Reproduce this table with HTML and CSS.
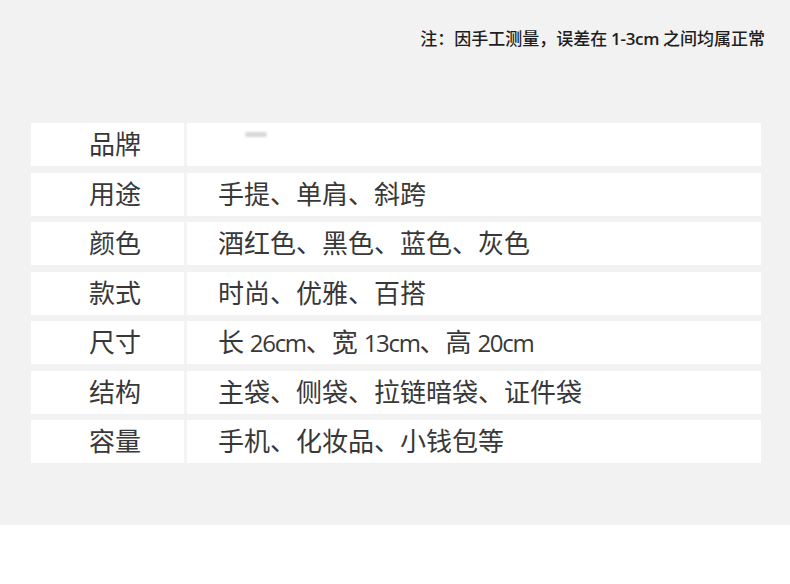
FILE: index.html
```html
<!DOCTYPE html>
<html lang="zh-CN">
<head>
<meta charset="utf-8">
<title>商品参数</title>
<link rel="stylesheet" href="styles.css">
</head>
<body>
<div class="page">
  <div class="note">注：因手工测量，误差在 <span class="lat">1-3cm</span> 之间均属正常</div>
  <div class="table">
    <div class="row"><div class="label">品牌</div><div class="value"><span class="logo-blur"></span></div></div>
    <div class="row"><div class="label">用途</div><div class="value">手提、单肩、斜跨</div></div>
    <div class="row"><div class="label">颜色</div><div class="value">酒红色、黑色、蓝色、灰色</div></div>
    <div class="row"><div class="label">款式</div><div class="value">时尚、优雅、百搭</div></div>
    <div class="row"><div class="label">尺寸</div><div class="value">长 <span class="num">26cm</span>、宽 <span class="num">13cm</span>、高 <span class="num">20cm</span></div></div>
    <div class="row"><div class="label">结构</div><div class="value">主袋、侧袋、拉链暗袋、证件袋</div></div>
    <div class="row"><div class="label">容量</div><div class="value">手机、化妆品、小钱包等</div></div>
  </div>
</div>
</body>
</html>
```
FILE: styles.css
```css
html, body {
  margin: 0;
  padding: 0;
  background: #ffffff;
}
body {
  font-family: "Noto Sans CJK SC", "Noto Sans", sans-serif;
  color: #333333;
}
.page {
  background: #f2f2f2;
  height: 525px;
  padding-top: 26px;
  box-sizing: border-box;
}
.note {
  text-align: right;
  padding-right: 25px;
  font-size: 17px;
  line-height: 24px;
  font-weight: 500;
  color: #1e1e1e;
}
.lat {
  font-family: "Open Sans", sans-serif;
  font-size: 17px;
  font-weight: 600;
  letter-spacing: -0.3px;
}
.table {
  margin: 72px 0 0 31px;
  width: 730px;
  display: flex;
  flex-direction: column;
  gap: 6.5px;
}
.row {
  display: flex;
  height: 43px;
  gap: 3px;
  background: #f4f4f4;
}
.label {
  width: 153px;
  background: #ffffff;
  padding-left: 58px;
  box-sizing: border-box;
  font-size: 26px;
  line-height: 40px;
  color: #383838;
}
.value {
  flex: 1;
  background: #ffffff;
  padding-left: 31px;
  font-size: 26px;
  line-height: 40px;
  color: #383838;
  position: relative;
}
.num {
  font-family: "Open Sans", sans-serif;
  font-size: 24px;
  letter-spacing: -1.3px;
}
.logo-blur {
  position: absolute;
  left: 58px;
  top: 9px;
  width: 22px;
  height: 5px;
  border-radius: 3px;
  background: #d8d8d8;
  filter: blur(1px);
}
```
